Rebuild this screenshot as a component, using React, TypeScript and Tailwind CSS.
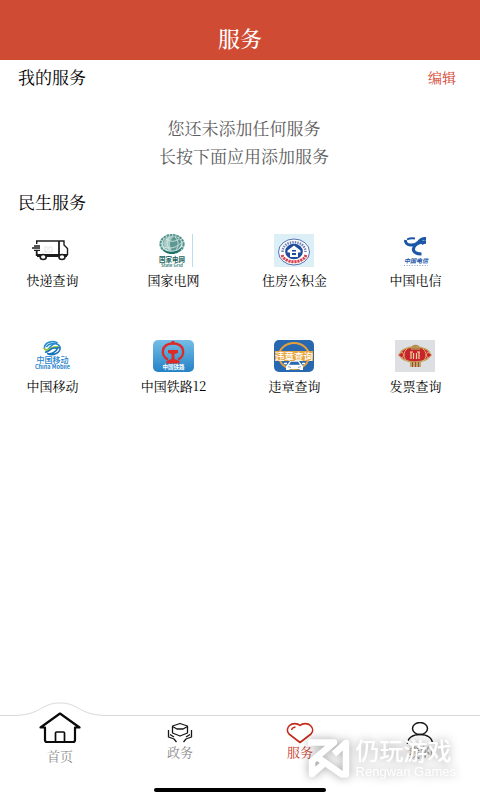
import type { ReactNode } from "react";

interface ServiceItem {
  id: string;
  name: string;
  icon: ReactNode;
}

interface TabItem {
  id: string;
  label: string;
  icon: ReactNode;
  active?: boolean;
  raised?: boolean;
}

function ExpressIcon() {
  return (
    <svg viewBox="0 0 41 34" className="h-[34px] w-[41px]" fill="none" stroke="#1c1c1c" strokeWidth="1.4">
      <path d="M4.700 10V7H32v4l3.500 3.500V21" />
      <path d="M27 7v13.500" strokeWidth="1.800" />
      <path d="M4.700 17v4h31" strokeWidth="1.800" />
      <path d="M8 12H2M8 14H0M8 16.300H2" strokeWidth="1.300" />
      <path d="M5 22.500h30" strokeWidth="1" />
      <ellipse cx="11.200" cy="23" rx="3" ry="2.500" fill="#fff" strokeWidth="1.600" />
      <ellipse cx="30" cy="23" rx="3" ry="2.500" fill="#fff" strokeWidth="1.600" />
      <path d="M13 13h7v5h-7zM15 15h3" stroke="#e4e4e4" strokeWidth="1" />
    </svg>
  );
}

function StateGridIcon() {
  return (
    <svg viewBox="0 0 41 34" className="h-[34px] w-[41px]">
      <ellipse cx="19" cy="10" rx="12.500" ry="10" fill="#d7e8e5" />
      <ellipse cx="19" cy="10" rx="11.600" ry="9" fill="none" stroke="#4f918b" strokeWidth="2" strokeDasharray="2.500 .8" />
      <ellipse cx="19" cy="9.500" rx="9.300" ry="7.300" fill="#5d9992" />
      <path d="M10 9c3-7 8-8 12-7-6 3-6 9-3 15-5-1-8-3-9-8z" fill="#a9cbc7" />
      <path d="M11 13c6 2 12 1 17-4M13 5c4 3 9 3 13 0M16 3c-3 5-2 9 1 13M22 3c4 4 4 9 1 13" fill="none" stroke="#d9ebe8" strokeWidth=".8" />
      <path d="M9 15c6 4 14 4 20-2-2 5-6 7-10 7s-8-2-10-5z" fill="#1f7069" />
      <text x="19" y="28" textAnchor="middle" fontSize="6.500" fontWeight="700" fill="#22645e">国家电网</text>
      <text x="19" y="33" textAnchor="middle" fontSize="4.500" fontWeight="700" fill="#4a8d87">State Grid</text>
      <path d="M39.500 0v33" stroke="#b9dcf2" />
    </svg>
  );
}

function HousingFundIcon() {
  return (
    <svg viewBox="0 0 41 34" className="h-[34px] w-[41px]">
      <path d="M0 0h40v33H0z" fill="#dceff6" />
      <ellipse cx="20" cy="18" rx="15.500" ry="13" fill="#fff" stroke="#5672ae" strokeWidth="1" />
      <path d="M8.500 18c0-13 23-13 23 0" fill="none" stroke="#6f83b5" strokeWidth="2.500" strokeDasharray="1.500 1" />
      <path d="M8 21c3 9 21 9 24 0" fill="none" stroke="#d8404d" strokeWidth="3" strokeDasharray="2.200 .8" />
      <ellipse cx="20" cy="17.500" rx="8.800" ry="7.800" fill="#214b9b" />
      <path d="m13.500 16.500 6.500-5 6.500 5v2h-2.500v4.500h-8v-4.500h-2.500z" fill="#fff" />
      <path d="M18 16h4v1.500h-4zM18 19h4v2h-4z" fill="#214b9b" />
    </svg>
  );
}

function TelecomIcon() {
  return (
    <svg viewBox="0 0 41 34" className="h-[34px] w-[41px]" fill="none" stroke="#1b57a6">
      <path d="M10.500 6c-1 6 9 6.500 13 2 2-2.500 4-4 7.500-3.500" strokeWidth="3" />
      <path d="M12 5.500c3-1.500 5-1.500 8-1" strokeWidth="1.800" />
      <path d="M31 8.500c-5-.5-10 1-12 4.500-2 4.500 1.500 7 7.500 7" strokeWidth="3" />
      <path d="M30 5v3.500l-3 2" strokeWidth="1.500" />
      <text x="21" y="28.500" textAnchor="middle" fontSize="6" fontWeight="700" fontStyle="italic" fill="#1b57a6" stroke="none">中国电信</text>
      <path d="M9 31.500h24" stroke="#7fa5d2" strokeWidth="1" strokeDasharray="1 1.600" />
    </svg>
  );
}

function MobileIcon() {
  return (
    <svg viewBox="0 0 41 34" className="h-[34px] w-[41px]">
      <g fill="none" strokeWidth="1.600">
        <path d="M12.500 9c-1-7 9-9 13-6M14 10c3 1 4-5 8-6 3-1 5 1 6 3" stroke="#248ace" />
        <path d="M14.500 7c2-4 7-3 9-4" stroke="#248ace" />
        <path d="M12 8c3 7 8-5 16 0" stroke="#9bc53a" strokeWidth="1.800" />
        <path d="M13 12c4 1 5-4 9-4 3 0 4 1 5-1M15 13.500c4 1 9-1 11-6M28 7c1 6-7 9-12 7" stroke="#1574bd" />
      </g>
      <text x="20.500" y="23" textAnchor="middle" fontSize="8" fontWeight="500" fill="#1f82cb">中国移动</text>
      <text x="20.500" y="29" textAnchor="middle" fontSize="5.500" fontWeight="700" fill="#1f82cb">China Mobile</text>
    </svg>
  );
}

function RailwayIcon() {
  return (
    <svg viewBox="0 0 41 34" className="h-[34px] w-[41px]">
      <defs>
        <linearGradient id="railway" x1="0" y1="0" x2="0" y2="1">
          <stop offset="0" stopColor="#75bde6" />
          <stop offset="1" stopColor="#2382c6" />
        </linearGradient>
      </defs>
      <rect width="41" height="32" rx="5" fill="url(#railway)" />
      <path d="M15 19.500C7 16 8 3.500 20 3.500S33 16 25 19.500" fill="none" stroke="#dc2b27" strokeWidth="2.400" />
      <path d="M18.500 1h3v3h-3zM15 10h10v3l-3.500 1v5l5 2v2.500h-13V21l5-2v-5L15 13z" fill="#dc2b27" />
      <text x="20.500" y="29" textAnchor="middle" fontSize="5.500" fontWeight="700" fill="#fff">中国铁路</text>
    </svg>
  );
}

function ViolationIcon() {
  return (
    <svg viewBox="0 0 41 34" className="h-[34px] w-[41px]">
      <rect width="40" height="32" rx="5" fill="#2868b1" />
      <ellipse cx="20" cy="16" rx="15" ry="13" fill="none" stroke="#e7a13b" strokeWidth="2" />
      <path d="M1 11h38v10H1z" fill="#eaa640" />
      <text x="20" y="19.500" textAnchor="middle" fontSize="9.500" fontWeight="500" fill="#fff">违章查询</text>
      <path d="m13 25 3-4h9l3 4 1 1v4h-3l-1-1h-9l-1 1h-3v-4z" fill="#fff" />
      <path d="m15.500 24.500 1.500-2.500h7l1.500 2.500zM14 26.500l3 1M27 26.500l-3 1" fill="#2868b1" stroke="#2868b1" strokeWidth=".6" />
      <path d="M10 23.500h3M28 23.500h3" stroke="#fff" strokeWidth="1.500" />
    </svg>
  );
}

function InvoiceIcon() {
  return (
    <svg viewBox="0 0 41 34" className="h-[34px] w-[41px]">
      <path d="M0 0h40v32H0z" fill="#dddfe2" />
      <path d="M15 21h11v6H15z" fill="#c0a46a" />
      <ellipse cx="20" cy="14.500" rx="15" ry="7.500" fill="#c9242c" stroke="#c3a15c" strokeWidth="1.500" />
      <path d="m7 12-4 3 4 3 2-3zM33 12l4 3-4 3-2-3z" fill="#c9242c" stroke="#dbbd80" strokeWidth=".8" />
      <path d="M12 9c-4 3-4 9 0 12M28 9c4 3 4 9 0 12" fill="none" stroke="#d9b673" strokeWidth="1" />
      <path d="M16 12v7M18.500 13v6M21.500 13v6M24 12v7M15 12h3M22 12h3" stroke="#f0d7a2" strokeWidth="1.200" />
      <path d="M17 8.500c0-4 7-4 7 0M16 9h9M20.500 5v4" fill="none" stroke="#b18d4b" strokeWidth="1.600" />
      <path d="M17.500 22v5M20.500 22v5M23.500 22v5" stroke="#8f3b29" strokeWidth=".8" />
    </svg>
  );
}

function HomeIcon() {
  return (
    <svg viewBox="0 0 42 32" className="h-8 w-[42px]" fill="none" stroke="#0a0a0a" strokeWidth="2.200" strokeLinejoin="round">
      <path d="M1.500 15.500 21 1.500l19.500 14H36V28q0 2-2 2H8q-2 0-2-2V15.500z" />
      <path d="M16.500 30V21q0-1 1-1h7q1 0 1 1v9" strokeWidth="1.700" />
    </svg>
  );
}

function AffairsIcon() {
  return (
    <svg viewBox="0 0 26 22" className="h-[22px] w-[26px]" fill="none" stroke="#171717" strokeWidth="1.300" strokeLinejoin="round">
      <path d="m13 1.500 7.500 2.500v7L13 14l-7.500-3V4z" />
      <path d="m5.500 4.500 4.500 2.500h6l4.500-2.500" />
      <path d="M1.500 8v7l5.500 2 2.500 3M3 12.500l4 2.500M24.500 8v7l-5.500 2-2.500 3M23 12.500 19 15" />
    </svg>
  );
}

function HeartIcon() {
  return (
    <svg viewBox="0 0 28 22" className="h-[22px] w-7" fill="none" stroke="#c32c1b" strokeWidth="1.600" strokeLinejoin="round">
      <path d="M14 3.500C11.500 1 6 1 3.500 3.500S.5 9.500 3 12l11 8.500L25 12c2.500-2.500 2-6-.5-8.500S16.500 1 14 3.500z" />
      <path d="M5.500 8q.5-2.500 4-3" strokeWidth="1.300" />
    </svg>
  );
}

function ProfileIcon() {
  return (
    <svg viewBox="0 0 28 22" className="h-[22px] w-7" fill="none" stroke="#171717" strokeWidth="1.500">
      <ellipse cx="14" cy="6.500" rx="7.500" ry="6" />
      <path d="M1.500 22c0-6 5-9.500 12.500-9.500S26.500 16 26.500 22" />
    </svg>
  );
}

const services: ServiceItem[] = [
  { id: "express", name: "快递查询", icon: <ExpressIcon /> },
  { id: "grid", name: "国家电网", icon: <StateGridIcon /> },
  { id: "fund", name: "住房公积金", icon: <HousingFundIcon /> },
  { id: "telecom", name: "中国电信", icon: <TelecomIcon /> },
  { id: "mobile", name: "中国移动", icon: <MobileIcon /> },
  { id: "railway", name: "中国铁路12", icon: <RailwayIcon /> },
  { id: "violation", name: "违章查询", icon: <ViolationIcon /> },
  { id: "invoice", name: "发票查询", icon: <InvoiceIcon /> },
];

const tabs: TabItem[] = [
  { id: "home", label: "首页", icon: <HomeIcon />, raised: true },
  { id: "affairs", label: "政务", icon: <AffairsIcon /> },
  { id: "services", label: "服务", icon: <HeartIcon />, active: true },
  { id: "mine", label: "我的", icon: <ProfileIcon /> },
];

function TabBar() {
  return (
    <nav className="mt-auto border-t border-[#d9d9d9] bg-white">
      <div className="grid grid-cols-4">
        {tabs.map((tab) => (
          <a
            key={tab.id}
            href={`#${tab.id}`}
            className={`relative flex h-[72px] flex-col items-center text-[13px] leading-4 ${
              tab.active ? "text-[#c8402f]" : "text-[#8c8c8c]"
            } ${tab.raised ? "gap-1" : "pt-1.5"}`}
          >
            {/* Curve that lifts the top border above the home tab */}
            {tab.raised && (
              <svg viewBox="0 0 96 14" className="absolute -top-3.5 h-3.5 w-24" fill="#fff">
                <path d="M0 13.500V14h96v-.5C66 13.500 68 1 48 1S30 13.500 0 13.500z" />
                <path d="M0 13.500C30 13.500 28 1 48 1s18 12.500 48 12.500" fill="none" stroke="#d9d9d9" />
              </svg>
            )}
            <span className={tab.raised ? "relative -mt-1" : ""}>{tab.icon}</span>
            <span>{tab.label}</span>
          </a>
        ))}
      </div>
      <div className="mx-auto mb-2 h-1 w-[36%] rounded-full bg-black" />
    </nav>
  );
}

function Watermark() {
  return (
    <div className="pointer-events-none absolute right-6 bottom-5 flex items-center gap-1.5 font-['Noto_Sans_CJK_SC',sans-serif] text-white drop-shadow-[0_0_5px_rgba(0,0,0,0.35)]">
      <svg viewBox="0 0 42 39" className="h-[39px] w-[42px]" fill="none" stroke="currentColor" strokeWidth="6.500" strokeLinejoin="round">
        <path d="M0 3.500h26L4 22v13l15-13M9 18l25 17.500h4V4L26 15" />
      </svg>
      <div className="flex flex-col">
        <span className="text-2xl leading-7 font-medium">仍玩游戏</span>
        <span className="font-['Liberation_Sans',sans-serif] text-[13px] leading-4">Rengwan Games</span>
      </div>
    </div>
  );
}

export default function App() {
  return (
    <div className="relative flex min-h-screen flex-col bg-white font-['Noto_Serif_CJK_SC','Liberation_Serif','Noto_Sans_CJK_SC',serif] text-black">
      <header className="flex h-[60px] items-end justify-center bg-[#cf4b34] pb-2">
        <h1 className="text-[22px] leading-7 font-medium text-white">服务</h1>
      </header>

      <main className="flex flex-col">
        <section>
          <div className="flex h-[34px] items-center justify-between pr-6 pl-[18px]">
            <h2 className="text-[17px] leading-6">我的服务</h2>
            <button type="button" className="text-sm text-[#d2412f]">
              编辑
            </button>
          </div>
          <div className="mt-5 pl-2 text-center text-[17px] leading-7 text-[#5c5c5c]">
            <p>您还未添加任何服务</p>
            <p>长按下面应用添加服务</p>
          </div>
        </section>

        <section className="mt-5">
          <h2 className="pl-[18px] text-[17px] leading-6">民生服务</h2>
          <div className="mt-5 grid grid-cols-4 gap-x-10 gap-y-13 pr-6 pl-3">
            {services.map((service) => (
              <button key={service.id} type="button" className="flex flex-col items-center gap-1">
                <span className="font-['Noto_Sans_CJK_SC',sans-serif]">{service.icon}</span>
                <span className="text-[13px] leading-4 whitespace-nowrap">{service.name}</span>
              </button>
            ))}
          </div>
        </section>
      </main>

      <TabBar />
      <Watermark />
    </div>
  );
}
